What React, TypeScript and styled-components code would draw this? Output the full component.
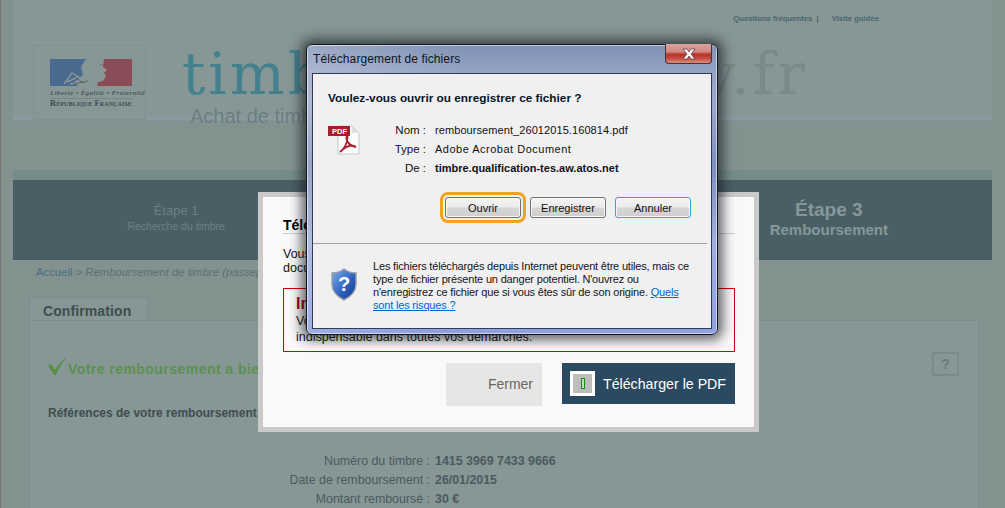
import React from "react";
import styled, { createGlobalStyle } from "styled-components";

const Global = createGlobalStyle`
  html, body { margin: 0; padding: 0; background: #83948f; }
  * { box-sizing: border-box; }
`;

const Screen = styled.div`
  position: relative; width: 1005px; height: 508px; overflow: hidden;
  background: #82928f; border-left: 1px solid #777; font-family: "Liberation Sans", Arial, sans-serif;
`;
const Page = styled.div`
  width: 979px; margin-left: 12px;
`;
const Header = styled.header`
  height: 121px; background: linear-gradient(#869795 0, #869795 115px, #8a9a9e 116px, #8a9a9e 120px, #82928f 121px);
`;
const TopLinks = styled.nav`
  display: flex; justify-content: flex-end; gap: 13px; height: 45px; padding: 13px 113px 0 0;
  font-size: 7.7px; font-weight: bold; color: #4a6670; line-height: 12px;
`;
const Brand = styled.div`
  display: flex; padding-left: 20px;
`;
const LogoBox = styled.div`
  width: 113px; height: 75px; border: 1px solid #7f9090; background: #869795; padding: 13px 0 0 16px;
  display: flex; flex-direction: column;
`;
const Motto = styled.div`
  font: italic bold 6.8px/8px "Liberation Serif", serif; color: #4a5560; width: 82px; margin-top: 2px; white-space: nowrap;
  border-bottom: 1px solid #76878a; padding-bottom: 1px; letter-spacing: .5px;
`;
const Republic = styled.div`
  font: bold 8.4px/10px "Liberation Serif", serif; font-variant: small-caps; color: #3f4a55; white-space: nowrap; letter-spacing: .1px;
`;
const TitleCol = styled.div`
  margin-left: 36px; width: 623px; margin-top: -4px;
`;
const SiteName = styled.div`
  display: grid; grid-template-columns: 1fr auto; font: 58px/66px "DejaVu Serif", serif; white-space: nowrap; letter-spacing: 3px;
`;
const SiteLeft = styled.span`
  color: #45808f; overflow: hidden;
`;
const SiteRight = styled.span`
  color: #798a8b; margin-right: -3px;
`;
const Tagline = styled.div`
  margin: -3px 0 0 8px; font-size: 20px; line-height: 24px; color: #6b7f84; white-space: nowrap;
`;
const Steps = styled.div`
  margin-top: 49px; display: grid; grid-template-columns: repeat(3, 1fr); height: 90px;
  border-top: 10px solid #748d8a; background: #4a5f65; text-align: center;
`;
const Step = styled.div<{ $active?: boolean }>`
  padding-top: ${p => (p.$active ? "19px" : "22px")};
  color: ${p => (p.$active ? "#86979a" : "#6b7f84")};
  font-weight: ${p => (p.$active ? "bold" : "normal")};
`;
const StepTitle = styled.div<{ $active?: boolean }>`
  font-size: ${p => (p.$active ? "19px" : "13px")}; line-height: ${p => (p.$active ? "22px" : "18px")};
`;
const StepSub = styled.div<{ $active?: boolean }>`
  font-size: ${p => (p.$active ? "15px" : "10.5px")}; line-height: ${p => (p.$active ? "18px" : "12px")};
`;
const Crumb = styled.div`
  margin: 5px 0 0 23px; height: 14px; font-size: 11.3px; line-height: 14px; white-space: nowrap; color: #5f6f72;
  font-style: italic;
`;
const CrumbLink = styled.span`
  color: #4a6d80; font-style: normal;
`;
const Tab = styled.div`
  margin: 18px 0 0 16px; width: 119px; height: 24px; padding-left: 13px; border: 1px solid #7c8d8c; border-bottom: 0;
  background: #869795; font-size: 14px; font-weight: bold; line-height: 26px; color: #3f4d50; letter-spacing: .1px;
`;
const Panel = styled.section`
  margin-left: 16px; width: 950px; height: 200px; border: 1px solid #7c8d8c; background: #869795; margin-top: -1px;
`;
const SuccessRow = styled.div`
  display: flex; justify-content: space-between; padding: 31px 19px 0 18px; height: 55px;
`;
const Success = styled.div`
  display: flex; align-items: flex-start; font-size: 14px; font-weight: bold; color: #5c914e; letter-spacing: .45px;
  height: 19px; line-height: 20px; white-space: nowrap; margin-top: 5px;
`;
const SuccessLabel = styled.span`
  margin-top: 2px;
`;
const Help = styled.div`
  width: 27px; height: 24px; border: 2px solid #7a8b8a; color: #6a7b7a; font-size: 15px; font-weight: bold;
  line-height: 20px; text-align: center;
`;
const RefTitle = styled.div`
  margin: 29px 0 0 18px; font-size: 12px; font-weight: bold; color: #3f4d50; line-height: 16px; white-space: nowrap;
`;
const Rows = styled.div`
  margin-top: 31px; display: grid; grid-template-columns: 400px auto; column-gap: 5px; grid-auto-rows: 19px;
  font-size: 12.4px; line-height: 19px; color: #4a5a60; justify-content: start;
`;
const RowLabel = styled.div`
  text-align: right;
`;
const RowValue = styled.div`
  font-weight: bold;
`;

const Modal = styled.div`
  position: absolute; left: 257px; top: 192px; width: 501px; height: 240px; border: 5px solid #c9c9c9;
  background: #f9f9f9; padding: 20px 19px 0 20px; color: #111;
`;
const ModalTitle = styled.div`
  font-size: 14px; font-weight: bold; line-height: 16px; height: 17px; border-bottom: 1px solid #ccc; color: #000;
`;
const ModalText = styled.div`
  margin-top: 13px; font-size: 12.5px; line-height: 14px; height: 28px;
`;
const Notice = styled.div`
  margin-top: 13px; height: 64px; border: 1px solid #c00; padding: 6px 12px; font-size: 12.5px; line-height: 16px;
`;
const NoticeTitle = styled.div`
  font-size: 16px; font-weight: bold; color: #b00020; line-height: 18px;
`;
const ModalActions = styled.div`
  display: flex; justify-content: flex-end; align-items: flex-start; gap: 20px; margin-top: 11px;
`;
const CloseBtn = styled.div`
  width: 96px; height: 43px; background: #e6e6e6; color: #666; font-size: 14px; line-height: 43px; text-align: right; padding-right: 9px;
`;
const PdfBtn = styled.div`
  width: 173px; height: 41px; background: #2a4a62; color: #fff; font-size: 14.2px; display: flex; align-items: center; padding-left: 8px; gap: 8px;
`;
const PdfGlyph = styled.div`
  width: 25px; height: 25px; border: 3px solid #fff; background: #bdbdbd; display: flex; align-items: center; justify-content: center;
`;
const PdfGlyphMark = styled.div`
  width: 4px; height: 11px; border: 1px solid #1a8a1a; background: #c8d8c8;
`;

const Dialog = styled.div`
  position: absolute; left: 305px; top: 44px; width: 412px; height: 291px; border-radius: 6px; border: 1px solid #14161c;
  background: linear-gradient(100deg, rgba(255,255,255,.22) 0, rgba(255,255,255,0) 35%), linear-gradient(#7f90b4 0, #93a3c4 25px, #9aa6cc 60px, #7f8fbf 120px, #a0aee0 200px, #8f9fe0 100%);
  box-shadow: 0 0 12px 5px rgba(20,24,30,.66), inset 0 0 0 1px rgba(255,255,255,.55);
  padding: 0 5px 5px; display: flex; flex-direction: column; font-family: "Liberation Sans", Arial, sans-serif;
`;
const TitleBar = styled.div`
  display: flex; justify-content: space-between; height: 28px; flex: none;
`;
const TitleText = styled.div`
  font-size: 12px; line-height: 28px; padding: 0 0 0 1px; color: #10141c; letter-spacing: .1px;
`;
const CloseX = styled.div`
  width: 47px; height: 20px; border: 1px solid #4a3038; border-top: 0; border-radius: 0 0 4px 4px; margin-top: -1px;
  background: linear-gradient(#d8a49c 0, #d08a82 40%, #b8322c 55%, #c44a40 75%, #d8907c 100%);
  display: flex; align-items: center; justify-content: center;
`;
const Pane = styled.div`
  flex: 1; background: #f0f0f0; border: 1px solid #333c55; color: #111; display: flex; flex-direction: column;
  padding: 16px 0 0 15px;
`;
const Ask = styled.div`
  font-size: 11.8px; font-weight: bold; line-height: 16px; color: #06122a;
`;
const FileRow = styled.div`
  display: flex; margin-top: 15px; height: 57px;
`;
const FileIcon = styled.div`
  width: 30px; padding-top: 4px; flex: none;
`;
const FileGrid = styled.div`
  display: grid; grid-template-columns: 68px auto; column-gap: 9px; grid-auto-rows: 19px;
  font-size: 11px; line-height: 19px; height: 57px; margin-top: 0;
`;
const FileLabel = styled.div`
  text-align: right; font-size: 11.5px;
`;
const FileValue = styled.div<{ $bold?: boolean; $tight?: boolean }>`
  font-weight: ${p => (p.$bold ? "bold" : "normal")};
  letter-spacing: ${p => (p.$bold ? "0" : p.$tight ? ".08px" : ".5px")};
  white-space: nowrap;
`;
const DialogActions = styled.div`
  display: flex; justify-content: flex-end; gap: 9px; padding-right: 20px; margin-top: 19px;
`;
const WinBtn = styled.div<{ $focus?: boolean; $blue?: boolean }>`
  width: 76px; height: 21px; border-radius: 3px; font-size: 11px; line-height: 20px; text-align: center; color: #111;
  border: 1px solid ${p => (p.$blue ? "#3c9fd0" : "#707070")};
  background: linear-gradient(#f4f4f4 0, #ebebeb 48%, #d6d6d6 52%, #cfcfcf 100%);
  ${p => p.$focus ? "outline: 3px solid #f4a21f; outline-offset: 2px;" : ""}
  box-shadow: inset 0 0 0 1px #f8f8f8;
`;
const Rule = styled.div`
  height: 1px; background: #a0a0a0; margin: 25px 4px 0 -15px;
`;
const WarnRow = styled.div`
  display: flex; margin: 16px 0 0 3px;
`;
const ShieldWrap = styled.div`
  width: 42px; flex: none; padding-top: 8px;
`;
const WarnText = styled.div`
  width: 320px; font-size: 11px; line-height: 13px; color: #10141c; letter-spacing: -.18px;
`;
const WarnLink = styled.span`
  color: #0066cc; text-decoration: underline;
`;

const Marianne = () => (
  <svg width="82" height="28" viewBox="0 0 82 28">
    <rect x="0" y="0" width="36" height="27" fill="#4a6a90" />
    <rect x="47" y="0" width="35" height="27" fill="#8a4c56" />
    <path d="M36 0 L54 0 L53 8 L57 11 L54 14 L56 17 L53 22 L48 23 L47 27 L28 27 L24 23 L33 16 L31 8 Z" fill="#869795" />
    <path d="M14 25 L22 14 L32 20 M17 23 L28 18 M20 25 L36 23" stroke="#869795" strokeWidth="1.4" fill="none" />
    <path d="M38 22 L24 25 M26 19 L34 24" stroke="#4a5560" strokeWidth=".8" fill="none" />
    <path d="M53 5 L50 6" stroke="#6a7680" strokeWidth="1" />
  </svg>
);

const Check = () => (
  <svg width="20" height="19" viewBox="0 0 20 19" style={{ flex: "none" }}>
    <path d="M0 9 L3 7 L7 13 C10 8 14 3 19 0 C14 5 11 11 8 18 L6 18 Z" fill="#5a8f4a" />
  </svg>
);

const PdfIcon = () => (
  <svg width="32" height="30" viewBox="0 0 32 30" style={{ display: "block" }}>
    <path d="M10 1 H24 L31 8 V29 H10 Z" fill="#fbfbfb" stroke="#c8c8c8" />
    <path d="M24 1 V8 H31 Z" fill="#e0e0e0" />
    <rect x="0" y="1" width="22" height="10" fill="#a81c2c" />
    <text x="4" y="9" fontFamily="Liberation Sans, sans-serif" fontSize="7.5" fontWeight="bold" fill="#fff">PDF</text>
    <path d="M12 27 C16 24 19 18 19.5 13 C19.7 10 18 11 18.5 14 C19.5 19 23 21 28 22 C24 19 18 21 12 27 Z" fill="none" stroke="#a81c2c" strokeWidth="1.8" />
  </svg>
);

const Shield = () => (
  <svg width="26" height="33" viewBox="0 0 26 33" style={{ display: "block" }}>
    <defs>
      <linearGradient id="sh" x1="0" y1="0" x2="1" y2="1">
        <stop offset="0" stopColor="#7fb0ec" />
        <stop offset=".55" stopColor="#2f63c0" />
        <stop offset="1" stopColor="#123a8c" />
      </linearGradient>
    </defs>
    <path d="M13 1 C17 4 21 5 25 5 V16 C25 24 19 29 13 32 C7 29 1 24 1 16 V5 C5 5 9 4 13 1 Z" fill="url(#sh)" stroke="#9aa0a6" strokeWidth="1.4" />
    <text x="13" y="23" textAnchor="middle" fontFamily="Liberation Sans, sans-serif" fontSize="20" fontWeight="bold" fill="#fff">?</text>
  </svg>
);

const XMark = () => (
  <svg width="16" height="12" viewBox="0 0 16 12">
    <path d="M2 1 H6 L8 4 L10 1 H14 L10 6 L14 11 H10 L8 8 L6 11 H2 L6 6 Z" fill="#fff" stroke="#5a4048" strokeWidth=".8" />
  </svg>
);

export default function App() {
  return (
    <Screen>
      <Global />
      <Page>
        <Header>
          <TopLinks>
            <span>Questions fréquentes &nbsp;|</span>
            <span>Visite guidée</span>
          </TopLinks>
          <Brand>
            <LogoBox>
              <Marianne />
              <Motto>Liberté • Égalité • Fraternité</Motto>
              <Republic>République Française</Republic>
            </LogoBox>
            <TitleCol>
              <SiteName>
                <SiteLeft>timbres</SiteLeft>
                <SiteRight>.gouv.fr</SiteRight>
              </SiteName>
              <Tagline>Achat de timbres</Tagline>
            </TitleCol>
          </Brand>
        </Header>
        <Steps>
          <Step>
            <StepTitle>Étape 1</StepTitle>
            <StepSub>Recherche du timbre</StepSub>
          </Step>
          <Step>
            <StepTitle>Étape 2</StepTitle>
            <StepSub>Vérification</StepSub>
          </Step>
          <Step $active>
            <StepTitle $active>Étape 3</StepTitle>
            <StepSub $active>Remboursement</StepSub>
          </Step>
        </Steps>
        <Crumb>
          <CrumbLink>Accueil</CrumbLink> &gt; Remboursement de timbre (passeport)
        </Crumb>
        <Tab>Confirmation</Tab>
        <Panel>
          <SuccessRow>
            <Success>
              <Check />
              <SuccessLabel>Votre remboursement a bien été pris en compte</SuccessLabel>
            </Success>
            <Help>?</Help>
          </SuccessRow>
          <RefTitle>Références de votre remboursement</RefTitle>
          <Rows>
            <RowLabel>Numéro du timbre :</RowLabel>
            <RowValue>1415 3969 7433 9666</RowValue>
            <RowLabel>Date de remboursement :</RowLabel>
            <RowValue>26/01/2015</RowValue>
            <RowLabel>Montant remboursé :</RowLabel>
            <RowValue>30 €</RowValue>
          </Rows>
        </Panel>
      </Page>

      <Modal>
        <ModalTitle>Téléchargement</ModalTitle>
        <ModalText>
          Vous pouvez télécharger votre justificatif.
          <br />
          document
        </ModalText>
        <Notice>
          <NoticeTitle>Important</NoticeTitle>
          Vous devez conserver ce document, il vous sera
          <br />
          indispensable dans toutes vos démarches.
        </Notice>
        <ModalActions>
          <CloseBtn>Fermer</CloseBtn>
          <PdfBtn>
            <PdfGlyph>
              <PdfGlyphMark />
            </PdfGlyph>
            Télécharger le PDF
          </PdfBtn>
        </ModalActions>
      </Modal>

      <Dialog>
        <TitleBar>
          <TitleText>Téléchargement de fichiers</TitleText>
          <CloseX>
            <XMark />
          </CloseX>
        </TitleBar>
        <Pane>
          <Ask>Voulez-vous ouvrir ou enregistrer ce fichier ?</Ask>
          <FileRow>
            <FileIcon>
              <PdfIcon />
            </FileIcon>
            <FileGrid>
              <FileLabel>Nom :</FileLabel>
              <FileValue $tight>remboursement_26012015.160814.pdf</FileValue>
              <FileLabel>Type :</FileLabel>
              <FileValue>Adobe Acrobat Document</FileValue>
              <FileLabel>De :</FileLabel>
              <FileValue $bold>timbre.qualification-tes.aw.atos.net</FileValue>
            </FileGrid>
          </FileRow>
          <DialogActions>
            <WinBtn $focus>Ouvrir</WinBtn>
            <WinBtn>Enregistrer</WinBtn>
            <WinBtn $blue>Annuler</WinBtn>
          </DialogActions>
          <Rule />
          <WarnRow>
            <ShieldWrap>
              <Shield />
            </ShieldWrap>
            <WarnText>
              Les fichiers téléchargés depuis Internet peuvent être utiles, mais ce type de fichier présente un danger potentiel. N'ouvrez ou n'enregistrez ce fichier que si vous êtes sûr de son origine. <WarnLink>Quels sont les risques ?</WarnLink>
            </WarnText>
          </WarnRow>
        </Pane>
      </Dialog>
    </Screen>
  );
}
